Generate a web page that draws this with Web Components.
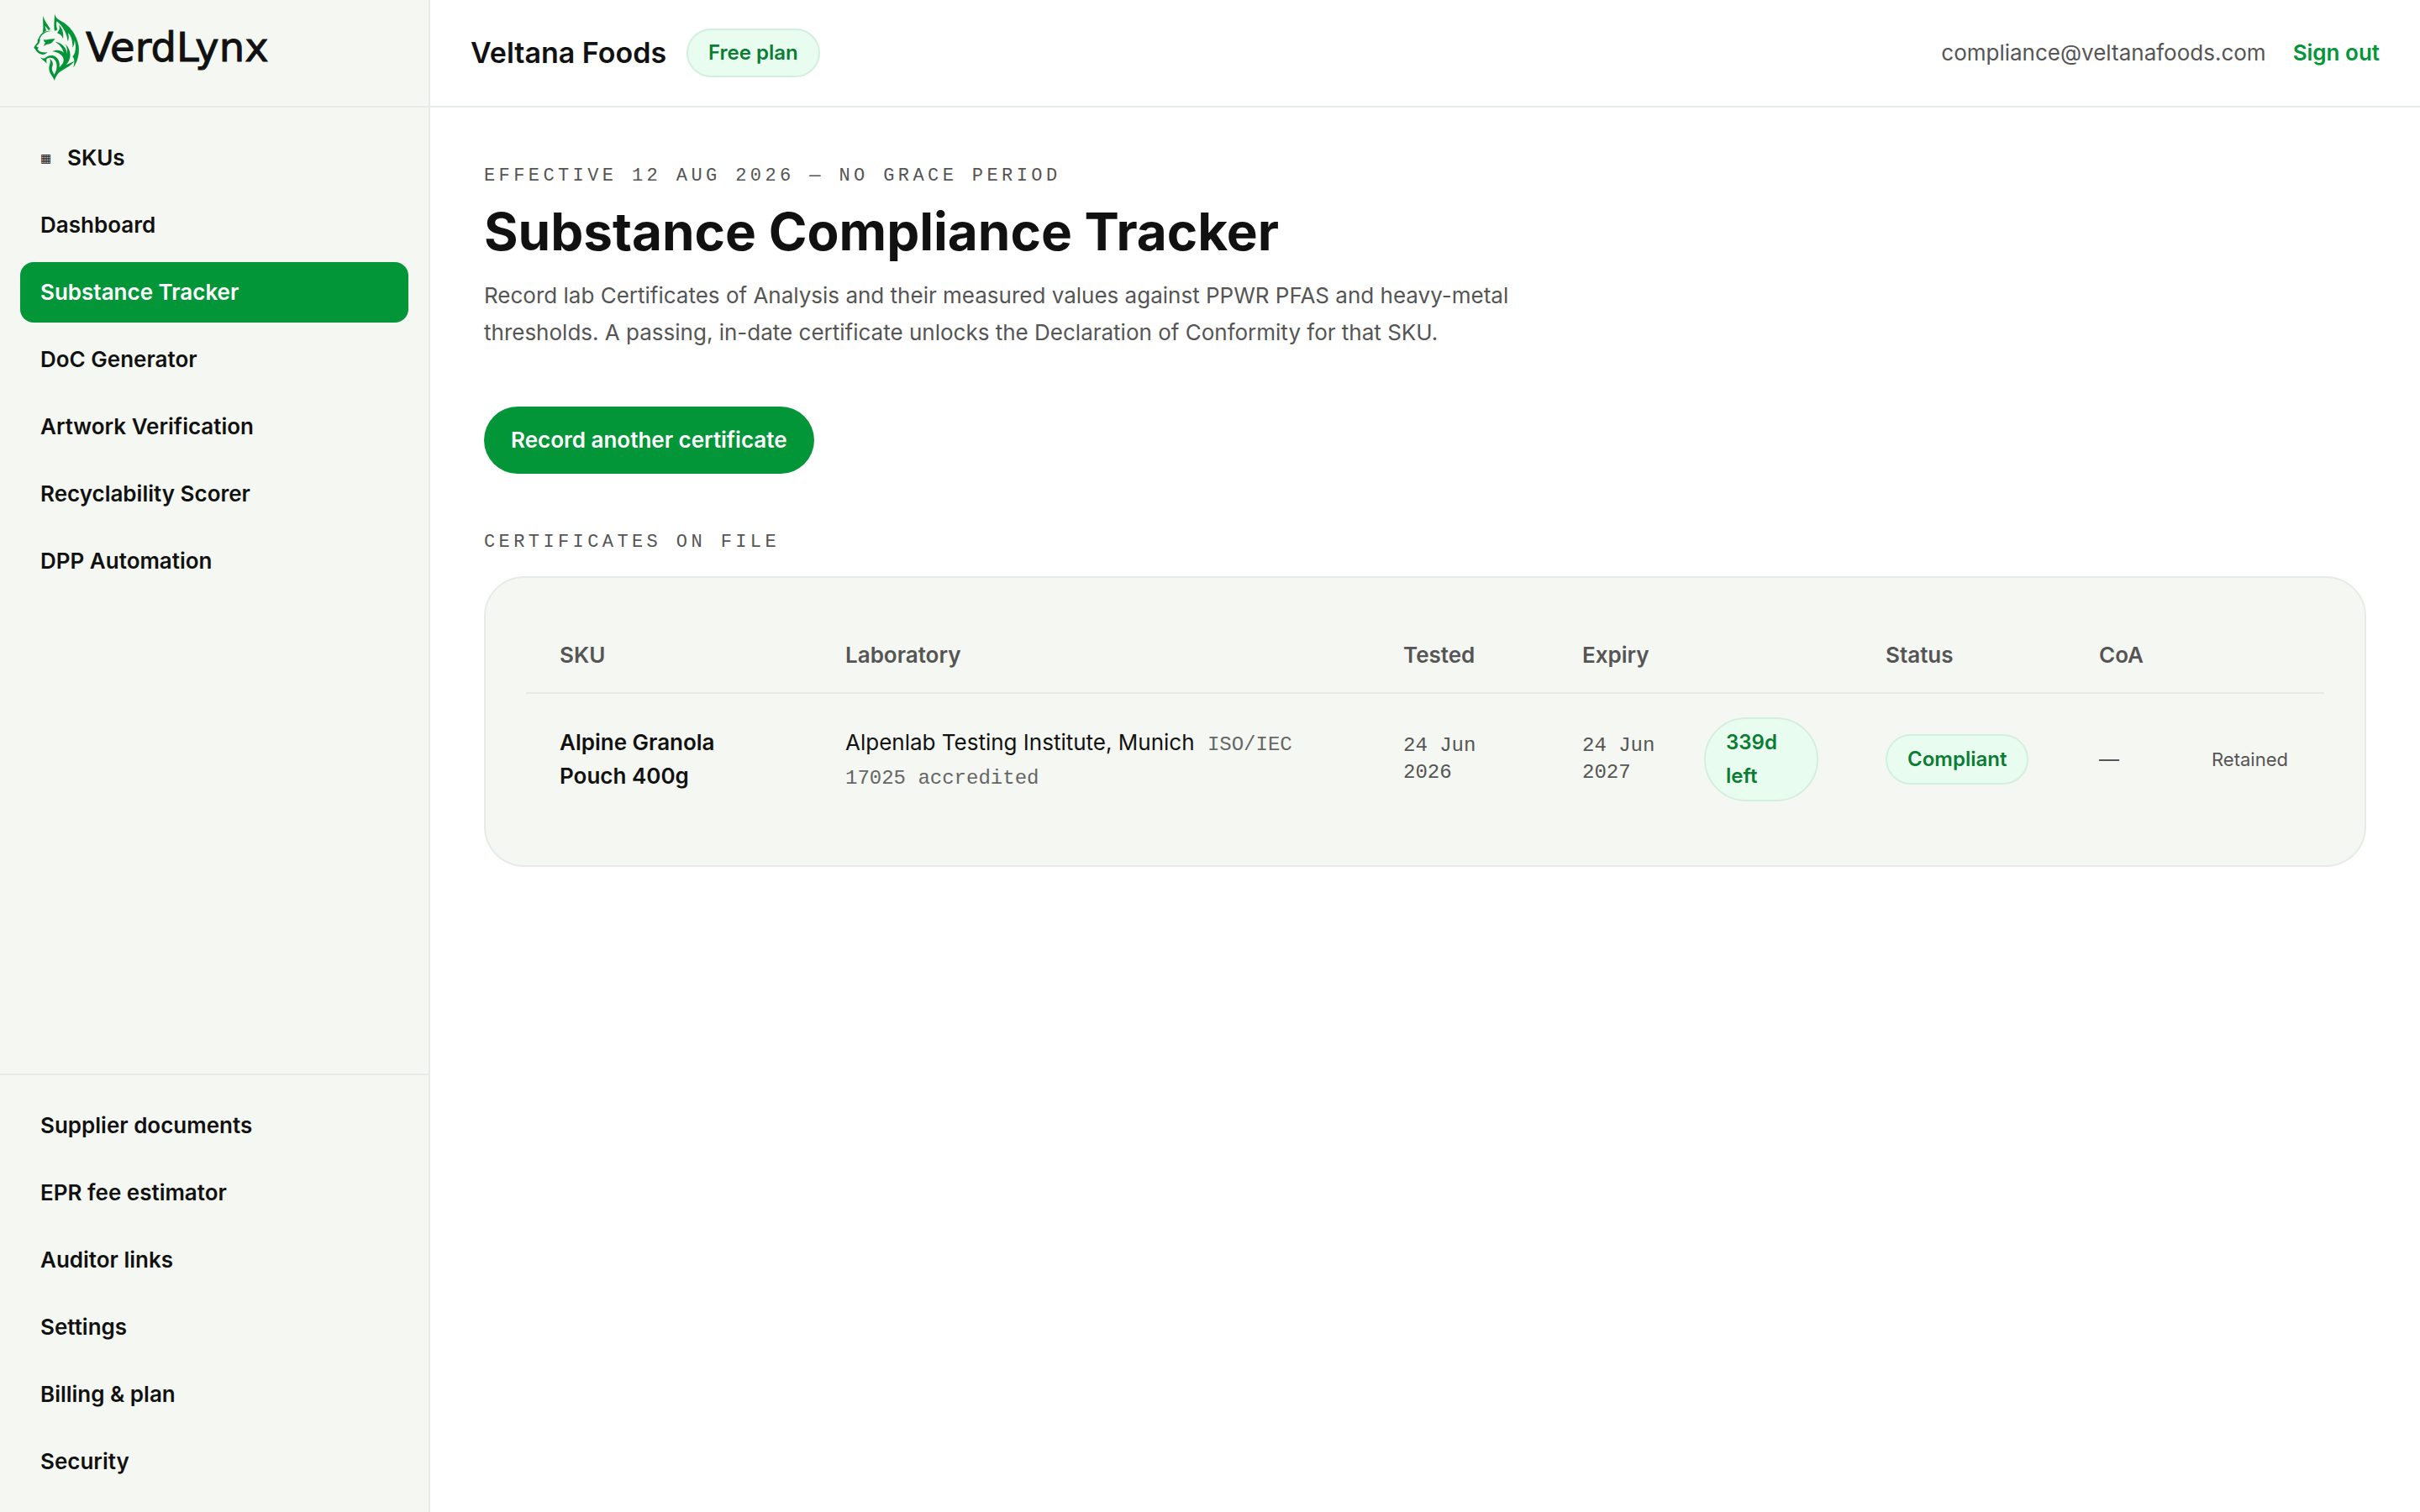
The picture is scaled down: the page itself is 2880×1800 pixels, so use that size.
<!DOCTYPE html>
<html lang="en">
<head>
<meta charset="utf-8">
<title>Substance Compliance Tracker – VerdLynx</title>
<style>
  :root {
    --green: #039639;
    --green-ink: #0a7d33;
    --mint: #e9fcf0;
    --mint-line: #d3f0de;
    --ink: #111111;
    --muted: #555555;
    --line: #e5ece8;
    --panel: #f5f7f2;
    --sans: Inter, "Liberation Sans", sans-serif;
    --mono: "Liberation Mono", monospace;
  }
  body { margin: 0; background: #fff; color: var(--ink); font: 400 26px/40px var(--sans); }
</style>
</head>
<body>
<app-shell>
  <side-bar slot="side">
    <brand-logo slot="brand"></brand-logo>
    <nav-item icon="▦">SKUs</nav-item>
    <nav-item>Dashboard</nav-item>
    <nav-item active>Substance Tracker</nav-item>
    <nav-item>DoC Generator</nav-item>
    <nav-item>Artwork Verification</nav-item>
    <nav-item>Recyclability Scorer</nav-item>
    <nav-item>DPP Automation</nav-item>
    <nav-item slot="foot">Supplier documents</nav-item>
    <nav-item slot="foot">EPR fee estimator</nav-item>
    <nav-item slot="foot">Auditor links</nav-item>
    <nav-item slot="foot">Settings</nav-item>
    <nav-item slot="foot">Billing &amp; plan</nav-item>
    <nav-item slot="foot">Security</nav-item>
  </side-bar>
  <top-bar slot="top" company="Veltana Foods" email="compliance@veltanafoods.com">
    <status-pill>Free plan</status-pill>
  </top-bar>
  <page-intro>
    <span slot="eyebrow">Effective 12 Aug 2026 — no grace period</span>
    <span slot="title">Substance Compliance Tracker</span>
    Record lab Certificates of Analysis and their measured values against PPWR PFAS and heavy-metal thresholds. A passing, in-date certificate unlocks the Declaration of Conformity for that SKU.
  </page-intro>
  <action-button>Record another certificate</action-button>
  <certificate-list></certificate-list>
</app-shell>

<script>
const define = (name, html, setup) => {
  const template = document.createElement('template');
  template.innerHTML = html;
  customElements.define(name, class extends HTMLElement {
    constructor() {
      super();
      this.attachShadow({ mode: 'open' }).append(template.content.cloneNode(true));
    }
    connectedCallback() { if (setup) setup(this, this.shadowRoot); }
  });
};

define('app-shell', `
  <style>
    :host { display: grid; grid-template-columns: 512px minmax(0, 1fr); min-height: 100vh; }
    .body { display: flex; flex-direction: column; }
    main { display: flex; flex-direction: column; align-items: stretch; padding: 62px 64px; }
  </style>
  <slot name="side"></slot>
  <div class="body"><slot name="top"></slot><main><slot></slot></main></div>`);

define('side-bar', `
  <style>
    :host { display: flex; flex-direction: column; box-sizing: border-box; background: var(--panel); border-right: 2px solid var(--line); }
    .brand { box-sizing: border-box; height: 128px; padding: 16px 40px; border-bottom: 2px solid var(--line); }
    nav { display: flex; flex-direction: column; gap: 8px; padding: 24px; }
    .foot { margin-top: auto; border-top: 2px solid var(--line); }
  </style>
  <div class="brand"><slot name="brand"></slot></div>
  <nav aria-label="Main"><slot></slot></nav>
  <nav class="foot" aria-label="Account"><slot name="foot"></slot></nav>`);

define('brand-logo', `
  <style>
    :host { display: block; }
    a { display: flex; align-items: flex-start; gap: 8px; color: inherit; text-decoration: none; font: 400 48px/80px "DejaVu Sans", sans-serif; -webkit-text-stroke: 1px currentColor; }
    svg { display: block; width: 54px; height: 80px; fill: var(--green); }
  </style>
  <a href="#"><svg viewBox="60 48 162 240" aria-hidden="true">
    <path d="M94 57 C98 74 110 88 120 104 L113 108 C108 100 104 96 101 92 C101 98 103 104 106 109 L92 117 C97 100 92 78 94 57Z"/>
    <path d="M135 49 C138 62 144 68 156 74 C186 88 214 122 221 164 C224 196 216 222 202 241 C207 222 206 210 199 202 C212 190 212 160 206 144 C206 158 203 164 199 170 C200 142 192 126 183 118 C187 134 185 142 182 148 C179 122 168 98 143 76 C140 86 141 96 145 106 L135 111 C131 92 135 70 135 49Z"/>
    <path d="M150 88 C163 102 168 118 165 138 C161 128 156 122 144 118 L149 110 C154 104 153 96 150 88Z"/>
    <path d="M124 111 C104 112 90 122 83 136 C82 144 84 148 79 155 L70 164 C71 168 76 167 78 170 L74 175 C79 186 90 188 110 187 C104 193 94 198 84 193 C77 190 68 183 67 177 L61 171 C62 164 72 156 75 150 C73 146 74 140 78 137 C84 121 98 108 124 111Z"/>
    <path d="M96 141 C106 145 118 137 137 139 C131 144 128 154 116 157 C104 158 103 162 94 165 C99 160 98 156 102 152 C98 150 96 146 96 141Z"/>
    <path d="M137 149 C158 152 177 168 180 192 C181 180 179 168 174 158 C196 180 196 210 176 232 L206 218 C190 240 160 248 148 262 C142 270 138 278 134 288 C130 272 115 264 115 244 C115 230 124 222 117 210 C128 218 132 226 126 240 C124 252 130 260 134 266 C144 250 146 230 137 216 C130 205 116 204 106 211 L106 227 C100 216 90 216 84 203 C90 209 96 209 101 208 C108 198 128 194 140 204 C152 213 154 228 152 240 C162 232 170 222 166 208 C162 196 148 186 127 184 C138 177 156 178 167 188 C163 170 152 158 137 149Z"/>
  </svg><span>VerdLynx</span></a>`);

define('nav-item', `
  <style>
    :host { display: block; }
    a { display: flex; align-items: center; gap: 20px; padding: 16px 24px; border-radius: 16px; color: var(--ink); font-weight: 600; line-height: 40px; text-decoration: none; }
    :host([active]) a { background: var(--green); color: #fff; }
    i { width: 12px; font: 400 14px/40px "DejaVu Sans", sans-serif; color: var(--ink); }
    i:empty { display: none; }
  </style>
  <a href="#"><i aria-hidden="true"></i><slot></slot></a>`, (host, root) => {
  root.querySelector('i').textContent = host.getAttribute('icon') || '';
  if (host.hasAttribute('active')) root.querySelector('a').setAttribute('aria-current', 'page');
});

define('status-pill', `
  <style>
    :host { display: inline-block; box-sizing: border-box; padding: 8px 24px; border: 2px solid var(--mint-line); border-radius: 50px; background: var(--mint); color: var(--green-ink); font-size: 24px; font-weight: 600; line-height: var(--pill-line, 40px); }
  </style>
  <slot></slot>`);

define('top-bar', `
  <style>
    :host { display: flex; align-items: center; justify-content: space-between; box-sizing: border-box; height: 128px; padding: 0 48px; border-bottom: 2px solid var(--line); --pill-line: 38px; }
    .org { display: flex; align-items: center; gap: 24px; }
    .org strong { font-size: 34px; font-weight: 600; line-height: 48px; }
    .user { display: flex; align-items: center; gap: 32px; color: var(--muted); }
    a { color: var(--green); font-weight: 600; text-decoration: none; }
  </style>
  <div class="org"><strong></strong><slot></slot></div>
  <div class="user"><span></span><a href="#">Sign out</a></div>`, (host, root) => {
  root.querySelector('strong').textContent = host.getAttribute('company');
  root.querySelector('.user span').textContent = host.getAttribute('email');
});

define('page-intro', `
  <style>
    :host { display: block; }
    .eyebrow { margin: 0; font: 400 22px/40px var(--mono); letter-spacing: 0.2em; text-transform: uppercase; color: var(--muted); }
    h1 { margin: 6px 0 14px; font-size: 62px; font-weight: 700; line-height: 80px; }
    .lead { max-width: 1280px; margin: 0; line-height: 44px; color: var(--muted); }
  </style>
  <p class="eyebrow"><slot name="eyebrow"></slot></p>
  <h1><slot name="title"></slot></h1>
  <p class="lead"><slot></slot></p>`);

define('action-button', `
  <style>
    :host { display: block; margin: 66px 0 62px; }
    button { display: block; padding: 20px 32px; border: 0; border-radius: 40px; background: var(--green); color: #fff; font: 600 26px/40px var(--sans); }
  </style>
  <button type="button"><slot></slot></button>`);

define('certificate-list', `
  <style>
    :host { display: block; }
    h2 { margin: 0 0 20px; font: 400 22px/40px var(--mono); letter-spacing: 0.2em; text-transform: uppercase; color: var(--muted); }
    .card { padding: 48px; border: 2px solid var(--line); border-radius: 48px; background: var(--panel); }
    table { width: 100%; table-layout: fixed; border-collapse: separate; border-spacing: 0; }
    th { padding: 24px 40px; border-bottom: 2px solid var(--line); text-align: left; font-weight: 600; color: var(--muted); }
    td { padding: 28px 40px; vertical-align: middle; }
    td.sku { font-weight: 600; }
    time { display: block; font: 400 24px/32px var(--mono); color: var(--muted); }
    .iso { margin-left: 8px; font: 400 24px/24px var(--mono); color: #666; }
    .expiry { display: flex; align-items: center; gap: 16px; }
    .expiry time { flex: 1; }
    .expiry status-pill { flex: 0 0 136px; }
    .coa { color: var(--muted); font-size: 24px; }
    .note { color: var(--muted); font-size: 22px; }
  </style>
  <h2>Certificates on file</h2>
  <div class="card">
    <table>
      <colgroup>
        <col style="width:340px"><col style="width:664px"><col style="width:213px"><col style="width:361px"><col style="width:254px"><col style="width:134px"><col style="width:174px">
      </colgroup>
      <thead><tr><th>SKU</th><th>Laboratory</th><th>Tested</th><th>Expiry</th><th>Status</th><th>CoA</th><th></th></tr></thead>
      <tbody><tr>
        <td class="sku">Alpine Granola Pouch 400g</td>
        <td>Alpenlab Testing Institute, Munich <span class="iso">ISO/IEC 17025 accredited</span></td>
        <td><time datetime="2026-06-24">24 Jun 2026</time></td>
        <td><div class="expiry"><time datetime="2027-06-24">24 Jun 2027</time><status-pill>339d left</status-pill></div></td>
        <td><status-pill>Compliant</status-pill></td>
        <td class="coa">—</td>
        <td class="note">Retained</td>
      </tr></tbody>
    </table>
  </div>`);
</script>
</body>
</html>
